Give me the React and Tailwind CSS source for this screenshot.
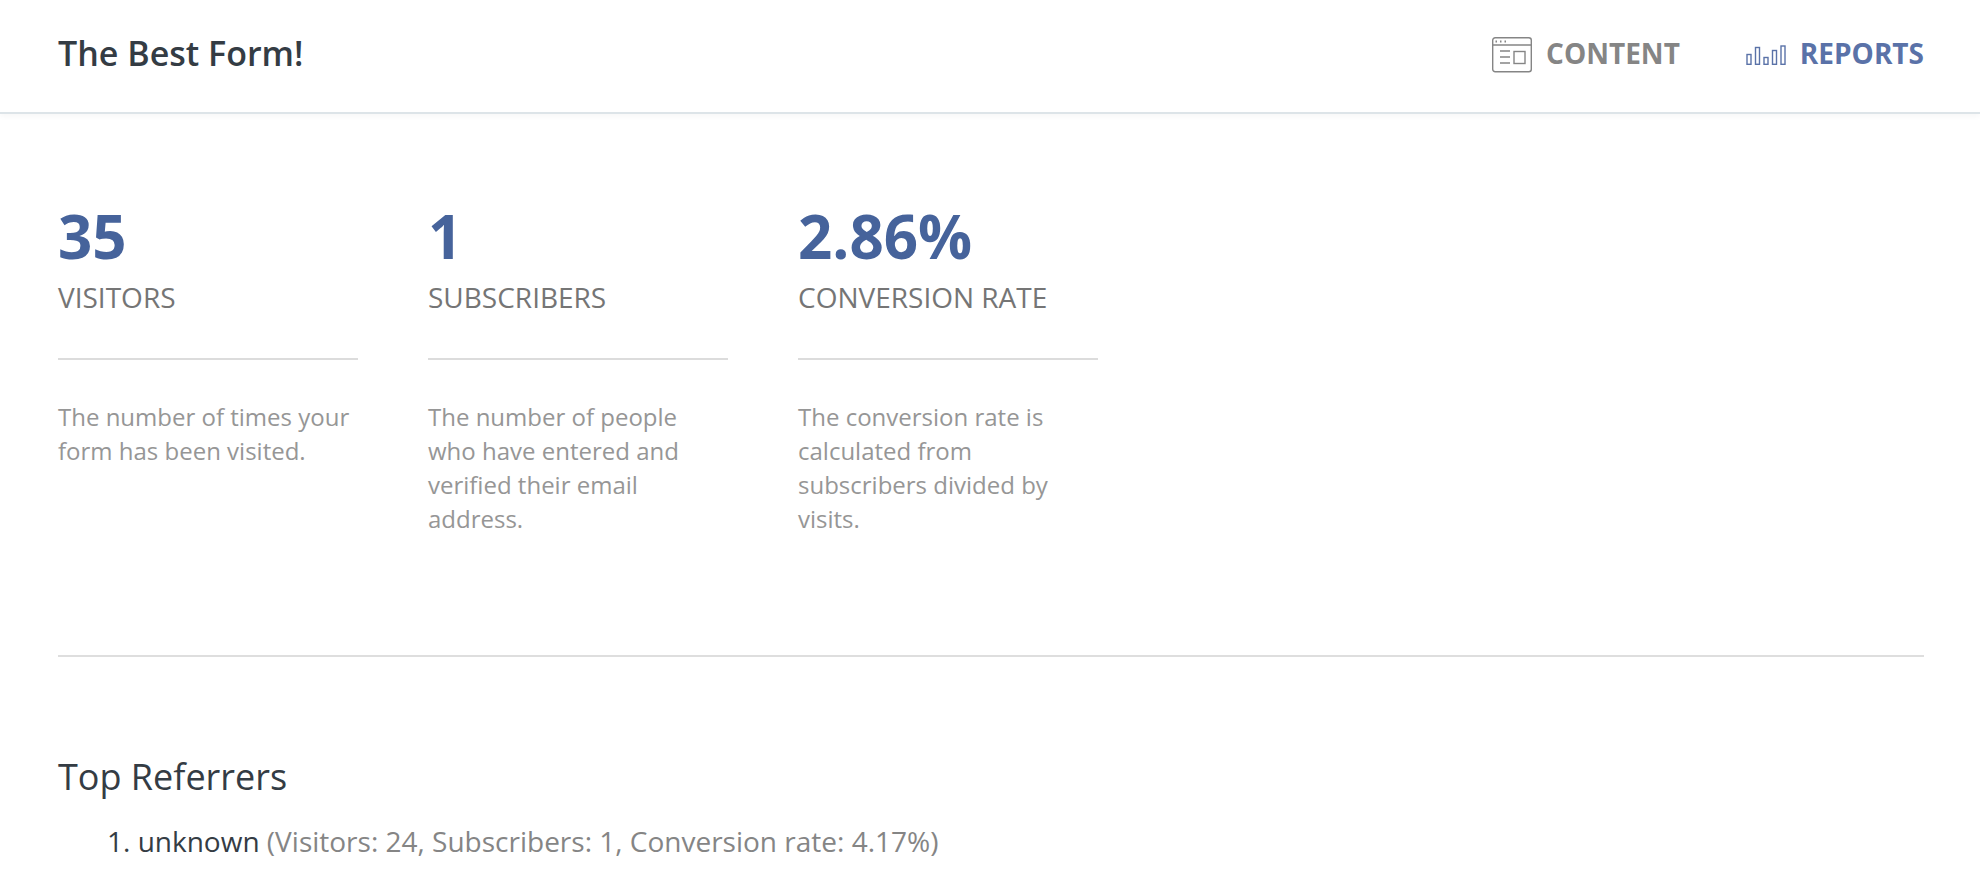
export default function App() {
  const stats = [
    { n: "35", l: "VISITORS", d: "The number of times your form has been visited." },
    { n: "1", l: "SUBSCRIBERS", d: "The number of people who have entered and verified their email address." },
    { n: "2.86%", l: "CONVERSION RATE", d: "The conversion rate is calculated from subscribers divided by visits." },
  ];
  return (
    <div className="w-[1980px] h-[870px] overflow-hidden bg-white font-['Open_Sans',sans-serif]">
      <header className="h-[114px] flex items-center justify-between pl-[58px] pr-[56px] pb-[6px] border-b-2 border-[#dde4e8] shadow-[0_2px_6px_rgba(0,0,0,0.04)]">
        <h1 className="text-[34px] font-semibold text-[#343c44]">The Best Form!</h1>
        <nav className="flex items-center gap-[66px]">
          <a className="flex items-center gap-[14px] text-[28px] font-bold text-[#858585]">
            <svg className="mt-[4px]" width="40" height="36" viewBox="0 0 40 36" fill="none" stroke="#858585" strokeWidth="1.4">
              <rect x="0.7" y="0.7" width="38.6" height="34" rx="2.5" />
              <path d="M1 8h38M8 14h10M8 20h10M8 26h10" />
              <rect x="22" y="14.500" width="11" height="12" />
              <path d="M3.500 4.500h1.500M8 4.500h1.500M12.500 4.500h1.500" strokeWidth="2" />
            </svg>
            CONTENT
          </a>
          <a className="flex items-center gap-[14px] text-[28px] font-bold text-[#5a72a8]">
            <svg className="mt-[4px]" width="40" height="20" viewBox="0 0 40 20" fill="none" stroke="#5a72a8" strokeWidth="1.4">
              <rect x="1" y="9.500" width="4" height="9.800" />
              <rect x="9.500" y="2.500" width="4" height="16.800" />
              <rect x="18" y="12.500" width="4" height="6.800" />
              <rect x="26.500" y="5.500" width="4" height="13.800" />
              <rect x="35" y="1" width="4" height="18.300" />
            </svg>
            REPORTS
          </a>
        </nav>
      </header>
      <main className="pl-[58px] pr-[56px]">
        <section className="flex gap-[70px] pt-[81px] pb-[119px] border-b-2 border-[#dedede]">
          {stats.map((s) => (
            <div key={s.l} className="w-[300px]">
              <div className="text-[60px] leading-[82px] font-bold text-[#46639b]">{s.n}</div>
              <div className="text-[28px] leading-[40px] text-[#757575] pb-[41px] border-b-2 border-[#dcdcdc]">{s.l}</div>
              <p className="mt-[40px] text-[24px] leading-[34px] text-[#969696]">{s.d}</p>
            </div>
          ))}
        </section>
        <h2 className="mt-[95px] text-[36px] leading-[50px] text-[#343c44]">Top Referrers</h2>
        <ol className="mt-[20px] pl-[49px] text-[28px] leading-[38px] text-[#343c44]">
          <li>1. unknown <span className="text-[#858585]">(Visitors: 24, Subscribers: 1, Conversion rate: 4.17%)</span></li>
        </ol>
      </main>
    </div>
  );
}
